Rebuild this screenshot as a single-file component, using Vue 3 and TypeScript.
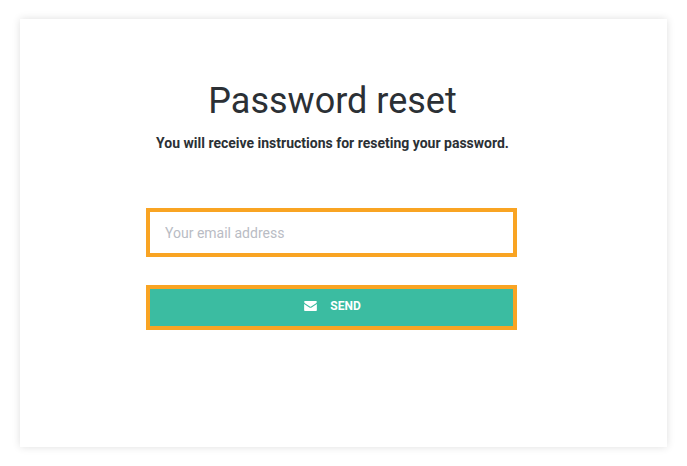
<template>
  <div class="page">
    <div class="card">
      <h1>Password reset</h1>
      <p class="sub">You will receive instructions for reseting your password.</p>
      <form class="reset-form" @submit.prevent>
        <input v-model="email" class="email" type="text" placeholder="Your email address">
        <button class="send" type="submit">
          <svg class="icon" viewBox="0 0 14 11" width="13" height="10">
            <path d="M0 1.2C0 .5.5 0 1.2 0h11.6c.7 0 1.2.5 1.2 1.2 0 .5-.4.9-.8 1.2L7.7 6.1c-.4.3-1 .3-1.4 0L.8 2.4C.4 2.1 0 1.700 0 1.2z" fill="#fff" />
            <path d="M0 3.300V9.800C0 10.500.5 11 1.200 11h11.600c.7 0 1.200-.5 1.200-1.200V3.300L8.300 7.100c-.8.5-1.800.5-2.600 0z" fill="#fff" />
          </svg>
          <span>SEND</span>
        </button>
      </form>
    </div>
  </div>
</template>

<script setup lang="ts">
import { ref } from 'vue'

const email = ref('')
</script>

<style>
html,
body {
  margin: 0;
  background: #fff;
}
</style>

<style scoped>
.page {
  width: 687px;
  height: 466px;
  box-sizing: border-box;
  padding: 19px 20px;
  font-family: Roboto, "Liberation Sans", sans-serif;
}

.card {
  height: 428px;
  background: #fff;
  box-shadow: 0 0 8px rgba(0, 0, 0, 0.13);
  display: flex;
  flex-direction: column;
  align-items: center;
  padding: 60px 24px 0 0;
  box-sizing: border-box;
}

h1 {
  margin: 0 0 0 2px;
  font-size: 36px;
  line-height: 44px;
  font-weight: 400;
  letter-spacing: 0;
  color: #2b3035;
}

.sub {
  margin: 10px 0 0 2px;
  font-size: 14px;
  line-height: 20px;
  font-weight: 700;
  color: #2b3035;
}

.reset-form {
  width: 371px;
  margin-top: 55px;
  display: flex;
  flex-direction: column;
  gap: 28px;
}

.email {
  height: 49px;
  box-sizing: border-box;
  width: 100%;
  border: 4px solid #f9a423;
  border-radius: 0;
  outline: none;
  padding: 0 15px;
  font-family: inherit;
  font-size: 14px;
  color: #2b3035;
}

.email::placeholder {
  color: #b9bcc4;
  opacity: 1;
}

.send {
  height: 45px;
  box-sizing: border-box;
  border: 4px solid #f9a423;
  background: #3bbca1;
  color: #fff;
  display: flex;
  align-items: center;
  justify-content: center;
  gap: 13px;
  font-family: inherit;
  font-size: 12px;
  font-weight: 700;
  padding: 0 0 4px 2px;
  cursor: pointer;
}

.icon {
  display: block;
}
</style>
